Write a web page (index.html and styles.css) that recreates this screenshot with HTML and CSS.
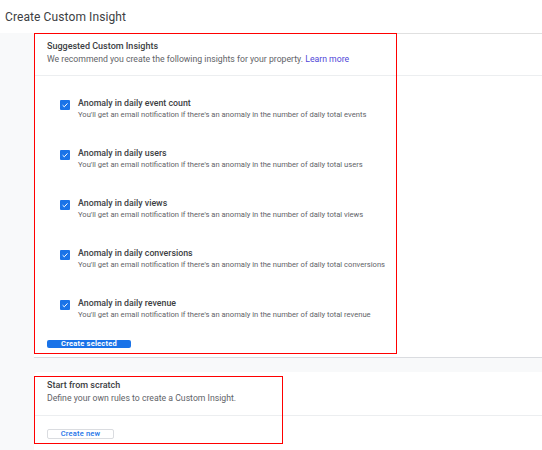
FILE: index.html
```html
<!DOCTYPE html>
<html>
<head>
<meta charset="utf-8">
<link rel="stylesheet" href="styles.css">
</head>
<body>
<header class="topbar">Create Custom Insight</header>
<main class="main">
  <section class="card card-suggested">
    <div class="card-head">
      <div class="card-title">Suggested Custom Insights</div>
      <div class="card-sub">We recommend you create the following insights for your property. <a class="link" href="#">Learn more</a></div>
    </div>
    <div class="list">
      <div class="item">
        <span class="cb"><svg viewBox="0 0 10 10" width="10" height="10"><path d="M2.6 5.2 L4.3 6.8 L7.5 3.4" fill="none" stroke="#fff" stroke-width="1"/></svg></span>
        <div class="item-text">
          <div class="item-title">Anomaly in daily event count</div>
          <div class="item-desc">You'll get an email notification if there's an anomaly in the number of daily total events</div>
        </div>
      </div>
      <div class="item">
        <span class="cb"><svg viewBox="0 0 10 10" width="10" height="10"><path d="M2.6 5.2 L4.3 6.8 L7.5 3.4" fill="none" stroke="#fff" stroke-width="1"/></svg></span>
        <div class="item-text">
          <div class="item-title">Anomaly in daily users</div>
          <div class="item-desc">You'll get an email notification if there's an anomaly in the number of daily total users</div>
        </div>
      </div>
      <div class="item">
        <span class="cb"><svg viewBox="0 0 10 10" width="10" height="10"><path d="M2.6 5.2 L4.3 6.8 L7.5 3.4" fill="none" stroke="#fff" stroke-width="1"/></svg></span>
        <div class="item-text">
          <div class="item-title">Anomaly in daily views</div>
          <div class="item-desc">You'll get an email notification if there's an anomaly in the number of daily total views</div>
        </div>
      </div>
      <div class="item">
        <span class="cb"><svg viewBox="0 0 10 10" width="10" height="10"><path d="M2.6 5.2 L4.3 6.8 L7.5 3.4" fill="none" stroke="#fff" stroke-width="1"/></svg></span>
        <div class="item-text">
          <div class="item-title">Anomaly in daily conversions</div>
          <div class="item-desc">You'll get an email notification if there's an anomaly in the number of daily total conversions</div>
        </div>
      </div>
      <div class="item">
        <span class="cb"><svg viewBox="0 0 10 10" width="10" height="10"><path d="M2.6 5.2 L4.3 6.8 L7.5 3.4" fill="none" stroke="#fff" stroke-width="1"/></svg></span>
        <div class="item-text">
          <div class="item-title">Anomaly in daily revenue</div>
          <div class="item-desc">You'll get an email notification if there's an anomaly in the number of daily total revenue</div>
        </div>
      </div>
    </div>
    <div class="card-foot foot-1">
      <button class="btn-primary">Create selected</button>
    </div>
    <div class="highlight hl-1"></div>
  </section>
  <section class="card card-scratch">
    <div class="card-head head-2">
      <div class="card-title">Start from scratch</div>
      <div class="card-sub">Define your own rules to create a Custom Insight.</div>
    </div>
    <div class="card-foot foot-2">
      <button class="btn-outline">Create new</button>
    </div>
    <div class="highlight hl-2"></div>
  </section>
</main>
</body>
</html>
```
FILE: styles.css
```css
* { box-sizing: border-box; }
html, body { margin: 0; padding: 0; }
body {
  font-family: Roboto, "Liberation Sans", sans-serif;
  background: #fff;
  width: 542px;
  height: 450px;
  overflow: hidden;
}
.topbar {
  height: 33px;
  padding-left: 5px;
  display: flex;
  align-items: center;
  font-size: 12px;
  color: #3c4043;
  letter-spacing: 0.1px;
}
.main {
  background: #f8f9fa;
  padding-left: 34px;
  height: 417px;
  display: flex;
  flex-direction: column;
  gap: 14px;
}
.card {
  background: #fff;
  position: relative;
}
.card-suggested {
  border-top: 1px solid #e0e0e0;
  border-bottom: 1px solid #dadce0;
}
.card-scratch {
  flex: 1;
  border-top-left-radius: 4px;
}
.card-head {
  padding: 6px 13px 9px;
  border-bottom: 1px solid #eceef0;
}
.head-2 {
  padding: 7px 13px 10px;
}
.card-title {
  font-size: 9px;
  line-height: 13px;
  font-weight: 500;
  color: #3c4043;
}
.card-sub {
  font-size: 8.7px;
  line-height: 13px;
  color: #5f6368;
}
.link {
  color: #4f46d8;
  text-decoration: none;
}
.list {
  padding: 21px 0 0 26px;
  display: flex;
  flex-direction: column;
  gap: 26px;
}
.item {
  display: flex;
  gap: 8px;
}
.cb {
  width: 10px;
  height: 10px;
  margin-top: 3px;
  background: #1a73e8;
  border-radius: 1px;
  display: flex;
  flex-shrink: 0;
}
.item-title {
  font-size: 8.8px;
  line-height: 12px;
  font-weight: 500;
  color: #3c4043;
}
.item-desc {
  font-size: 7.6px;
  line-height: 12px;
  color: #5f6368;
}
.card-foot {
  padding: 19px 13px 9px;
}
.foot-2 {
  padding: 13px 13px 0;
}
.btn-primary {
  display: block;
  width: 84px;
  height: 8px;
  padding: 0;
  border: 0;
  border-radius: 2px;
  background: #1a73e8;
  color: #fff;
  font-family: Roboto, "Liberation Sans", sans-serif;
  font-size: 7.5px;
  font-weight: 700;
  line-height: 8px;
  letter-spacing: 0.2px;
}
.btn-outline {
  display: block;
  width: 67px;
  height: 10px;
  padding: 0;
  border: 1px solid #dadce0;
  border-radius: 2px;
  background: #fff;
  color: #1a73e8;
  font-family: Roboto, "Liberation Sans", sans-serif;
  font-size: 7.5px;
  font-weight: 500;
  line-height: 8px;
  letter-spacing: 0.2px;
}
.highlight {
  position: absolute;
  border: 1.5px solid #f00;
  pointer-events: none;
}
.hl-1 {
  top: -1px;
  left: 0;
  width: 363px;
  height: 321px;
}
.hl-2 {
  top: 4px;
  left: 0;
  width: 249px;
  height: 68px;
}
```
